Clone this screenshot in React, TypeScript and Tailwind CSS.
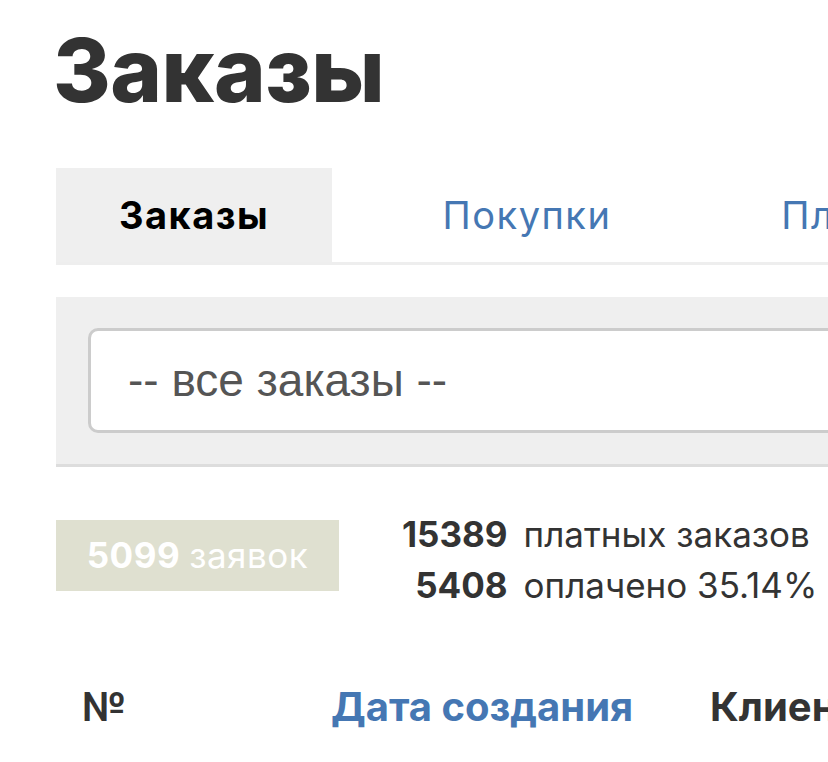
import React from 'react';

const tabs = [
  { id: 'orders', label: 'Заказы', width: 'w-[276px]' },
  { id: 'purchases', label: 'Покупки', width: 'w-[292px]' },
  { id: 'payments', label: 'Платежи', width: 'w-[292px]' },
];

function App() {
  const active = 'orders';

  return (
    <div className="w-full h-[762px] overflow-hidden bg-white text-[#333] font-['Inter','Noto_Sans',sans-serif]">
      <div className="pl-[56px] w-[1200px]">
        {/* Title */}
        <h1 className="pt-[22px] -ml-[3px] text-[88px] leading-[96px] font-extrabold tracking-[-0.5px]">Заказы</h1>

        {/* Tabs */}
        <div className="mt-[50px] flex gap-[49px] border-b-[3px] border-[#eeeeee]">
          {tabs.map((tab) => (
            <div
              key={tab.id}
              className={`${tab.width} h-[94px] flex items-center justify-center text-[38px] tracking-[1.5px] ${
                active === tab.id ? 'bg-[#efefef] text-black font-bold' : 'text-[#4577b3]'
              }`}
            >
              {tab.label}
            </div>
          ))}
        </div>

        {/* Filter */}
        <div className="mt-[32px] bg-[#efefef] border-b-[3px] border-[#dddddd] pl-[32px] py-[31px]">
          <div className="h-[105px] bg-white border-[3px] border-[#cccccc] rounded-[10px] flex items-center pl-[37px] text-[46px] text-[#555] font-['Liberation_Sans',Arial,sans-serif]">
            -- все заказы --
          </div>
        </div>

        {/* Stats */}
        <div className="mt-[53px] flex items-start">
          <div className="w-[283px] h-[71px] bg-[#dfe0d0] text-white text-[35px] tracking-[0.5px] flex items-center justify-center">
            <span className="font-bold">5099</span>
            <span className="ml-[9px]">заявок</span>
          </div>
          <div className="ml-[63px] grid grid-cols-[auto_auto] gap-x-[16px] text-[35px] leading-[51px] -mt-[11px]">
            <span className="font-bold text-right">15389</span>
            <span>платных заказов</span>
            <span className="font-bold text-right">5408</span>
            <span>оплачено 35.14%</span>
          </div>
        </div>

        {/* Table header */}
        <div className="mt-[66px] flex items-center text-[40px] font-bold">
          <div className="pl-[26px] w-[275px]">№</div>
          <div className="w-[379px] text-[#4577b3]">Дата создания</div>
          <div>Клиент</div>
        </div>
      </div>
    </div>
  );
}

export default App;
